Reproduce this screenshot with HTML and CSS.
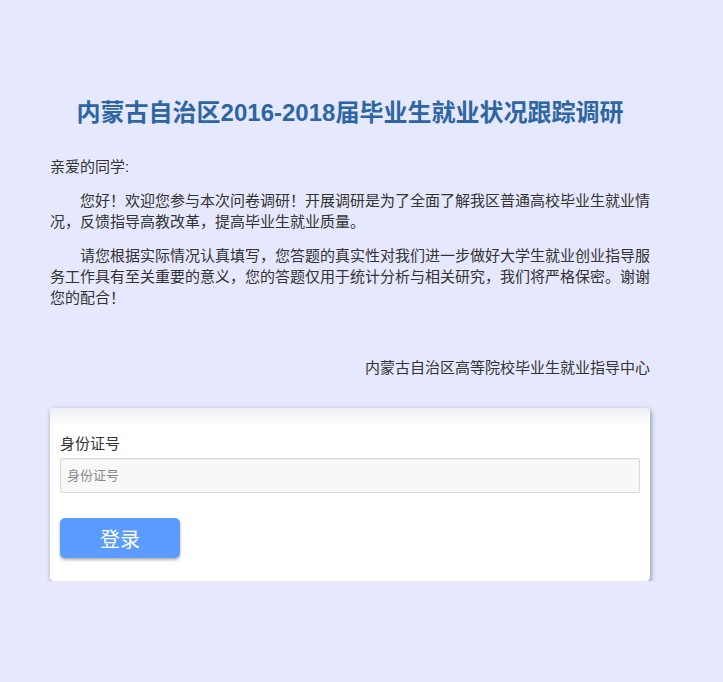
FILE: index.html
```html
<!DOCTYPE html>
<html lang="zh-CN">
<head>
<meta charset="utf-8">
<title>内蒙古自治区2016-2018届毕业生就业状况跟踪调研</title>
<link rel="stylesheet" href="styles.css">
</head>
<body>
<div class="wrap">
  <h1 class="title">内蒙古自治区2016-2018届毕业生就业状况跟踪调研</h1>
  <p class="greet">亲爱的同学:</p>
  <p class="para">您好！欢迎您参与本次问卷调研！开展调研是为了全面了解我区普通高校毕业生就业情况，反馈指导高教改革，提高毕业生就业质量。</p>
  <p class="para">请您根据实际情况认真填写，您答题的真实性对我们进一步做好大学生就业创业指导服务工作具有至关重要的意义，您的答题仅用于统计分析与相关研究，我们将严格保密。谢谢您的配合！</p>
  <p class="sign">内蒙古自治区高等院校毕业生就业指导中心</p>
  <div class="card">
    <div class="card-head"></div>
    <div class="card-body">
      <label class="label" for="idno">身份证号</label>
      <input class="input" id="idno" type="text" placeholder="身份证号">
      <button class="btn" type="button">登录</button>
    </div>
  </div>
</div>
</body>
</html>
```

FILE: styles.css
```css
html, body {
  margin: 0;
  padding: 0;
  background: #e6e8fd;
}
body {
  font-family: "Liberation Sans", Arial, "Noto Sans CJK SC", sans-serif;
  color: #333;
  font-size: 15px;
}
.wrap {
  width: 600px;
  margin-left: 50px;
  padding-top: 97px;
}
.title {
  margin: 0 0 27px;
  text-align: center;
  font-size: 24px;
  line-height: 32px;
  font-weight: bold;
  color: #2d66a2;
}
.greet, .para, .sign {
  margin: 0 0 13px;
  line-height: 21px;
}
.para {
  text-indent: 2em;
}
.sign {
  text-align: right;
  margin-top: 49px;
  margin-bottom: 30px;
}
.card {
  background: #fff;
  border-radius: 4px;
  box-shadow: 1px 2px 5px rgba(0,0,0,0.4);
  overflow: hidden;
}
.card-head {
  height: 18px;
  background: linear-gradient(#eeeff3, #ffffff);
}
.card-body {
  padding: 7px 10px 23px;
  display: flex;
  flex-direction: column;
  align-items: flex-start;
}
.label {
  font-size: 15px;
  line-height: 21px;
  margin-bottom: 4px;
}
.input {
  box-sizing: border-box;
  width: 580px;
  height: 35px;
  border: 1px solid #dadada;
  border-radius: 2px;
  background: #f8f8f8;
  padding: 0 6px;
  font-family: inherit;
  font-size: 13px;
  color: #333;
  outline: none;
  box-shadow: inset 0 1px 2px rgba(0,0,0,0.06);
}
.input::placeholder {
  color: #888;
}
.btn {
  margin-top: 25px;
  width: 120px;
  height: 40px;
  border: none;
  border-radius: 5px;
  background: #5a9bfd;
  color: #fff;
  font-family: inherit;
  font-size: 20px;
  box-shadow: 0 2px 3px rgba(0,0,0,0.3);
  cursor: pointer;
}
```
